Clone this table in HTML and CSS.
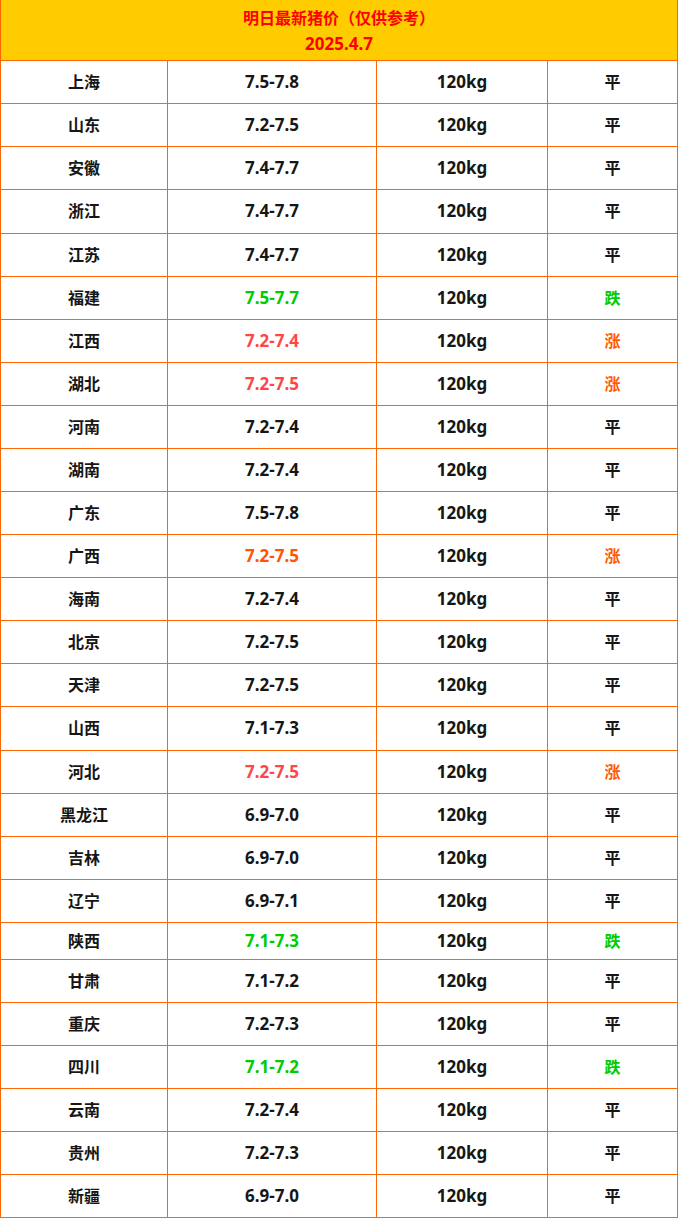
FILE: index.html
```html
<!DOCTYPE html>
<html lang="zh-CN">
<head>
<meta charset="utf-8">
<title>明日最新猪价</title>
<link rel="stylesheet" href="styles.css">
</head>
<body>
<table class="price-table">
  <colgroup>
    <col class="c-region">
    <col class="c-price">
    <col class="c-weight">
    <col class="c-trend">
  </colgroup>
  <thead>
    <tr class="head-row">
      <th colspan="4">
        <div class="title">明日最新猪价（仅供参考）</div>
        <div class="date">2025.4.7</div>
      </th>
    </tr>
  </thead>
  <tbody>
    <tr><td>上海</td><td class="num">7.5-7.8</td><td class="num">120kg</td><td>平</td></tr>
    <tr><td>山东</td><td class="num">7.2-7.5</td><td class="num">120kg</td><td>平</td></tr>
    <tr><td>安徽</td><td class="num">7.4-7.7</td><td class="num">120kg</td><td>平</td></tr>
    <tr class="tall"><td>浙江</td><td class="num">7.4-7.7</td><td class="num">120kg</td><td>平</td></tr>
    <tr><td>江苏</td><td class="num">7.4-7.7</td><td class="num">120kg</td><td>平</td></tr>
    <tr><td>福建</td><td class="num down">7.5-7.7</td><td class="num">120kg</td><td class="down">跌</td></tr>
    <tr><td>江西</td><td class="num up">7.2-7.4</td><td class="num">120kg</td><td class="up-word">涨</td></tr>
    <tr><td>湖北</td><td class="num up">7.2-7.5</td><td class="num">120kg</td><td class="up-word">涨</td></tr>
    <tr><td>河南</td><td class="num">7.2-7.4</td><td class="num">120kg</td><td>平</td></tr>
    <tr><td>湖南</td><td class="num">7.2-7.4</td><td class="num">120kg</td><td>平</td></tr>
    <tr><td>广东</td><td class="num">7.5-7.8</td><td class="num">120kg</td><td>平</td></tr>
    <tr><td>广西</td><td class="num up-alt">7.2-7.5</td><td class="num">120kg</td><td class="up-word">涨</td></tr>
    <tr><td>海南</td><td class="num">7.2-7.4</td><td class="num">120kg</td><td>平</td></tr>
    <tr><td>北京</td><td class="num">7.2-7.5</td><td class="num">120kg</td><td>平</td></tr>
    <tr><td>天津</td><td class="num">7.2-7.5</td><td class="num">120kg</td><td>平</td></tr>
    <tr class="tall"><td>山西</td><td class="num">7.1-7.3</td><td class="num">120kg</td><td>平</td></tr>
    <tr><td>河北</td><td class="num up">7.2-7.5</td><td class="num">120kg</td><td class="up-word">涨</td></tr>
    <tr><td>黑龙江</td><td class="num">6.9-7.0</td><td class="num">120kg</td><td>平</td></tr>
    <tr><td>吉林</td><td class="num">6.9-7.0</td><td class="num">120kg</td><td>平</td></tr>
    <tr><td>辽宁</td><td class="num">6.9-7.1</td><td class="num">120kg</td><td>平</td></tr>
    <tr class="short"><td>陕西</td><td class="num down">7.1-7.3</td><td class="num">120kg</td><td class="down">跌</td></tr>
    <tr><td>甘肃</td><td class="num">7.1-7.2</td><td class="num">120kg</td><td>平</td></tr>
    <tr><td>重庆</td><td class="num">7.2-7.3</td><td class="num">120kg</td><td>平</td></tr>
    <tr><td>四川</td><td class="num down">7.1-7.2</td><td class="num">120kg</td><td class="down">跌</td></tr>
    <tr><td>云南</td><td class="num">7.2-7.4</td><td class="num">120kg</td><td>平</td></tr>
    <tr><td>贵州</td><td class="num">7.2-7.3</td><td class="num">120kg</td><td>平</td></tr>
    <tr><td>新疆</td><td class="num">6.9-7.0</td><td class="num">120kg</td><td>平</td></tr>
  </tbody>
</table>
</body>
</html>
```

FILE: styles.css
```css
html, body {
  margin: 0;
  padding: 0;
  background: #ffffff;
}

body {
  font-family: "Noto Sans", "Noto Sans CJK SC", sans-serif;
  color: #161616;
}

.price-table {
  border-collapse: collapse;
  table-layout: fixed;
  width: 677px;
}

.c-region { width: 167px; }
.c-price { width: 209px; }
.c-weight { width: 171px; }
.c-trend { width: 130px; }

.price-table th,
.price-table td {
  border: 1px solid #ff6600;
  padding: 0;
  text-align: center;
  vertical-align: middle;
  font-weight: 700;
  font-size: 16px;
  line-height: 20px;
}

.price-table td.num {
  font-size: 17px;
}

.head-row th {
  background: #ffcc00;
  border-top: none;
  height: 60px;
  padding: 4px 0 2px;
  box-sizing: border-box;
  color: #ff0000;
}

.title {
  font-size: 16px;
  line-height: 26px;
}

.date {
  font-size: 17px;
  line-height: 26px;
}

.price-table tbody tr {
  height: 43px;
}

.price-table tbody tr.tall {
  height: 44px;
}

.price-table tbody tr.short {
  height: 37px;
}

.down {
  color: #00cc00;
}

.price-table td.up {
  color: #ff4545;
}

.price-table td.up-alt {
  color: #ff5500;
}

.up-word {
  color: #ff5a00;
}
```
